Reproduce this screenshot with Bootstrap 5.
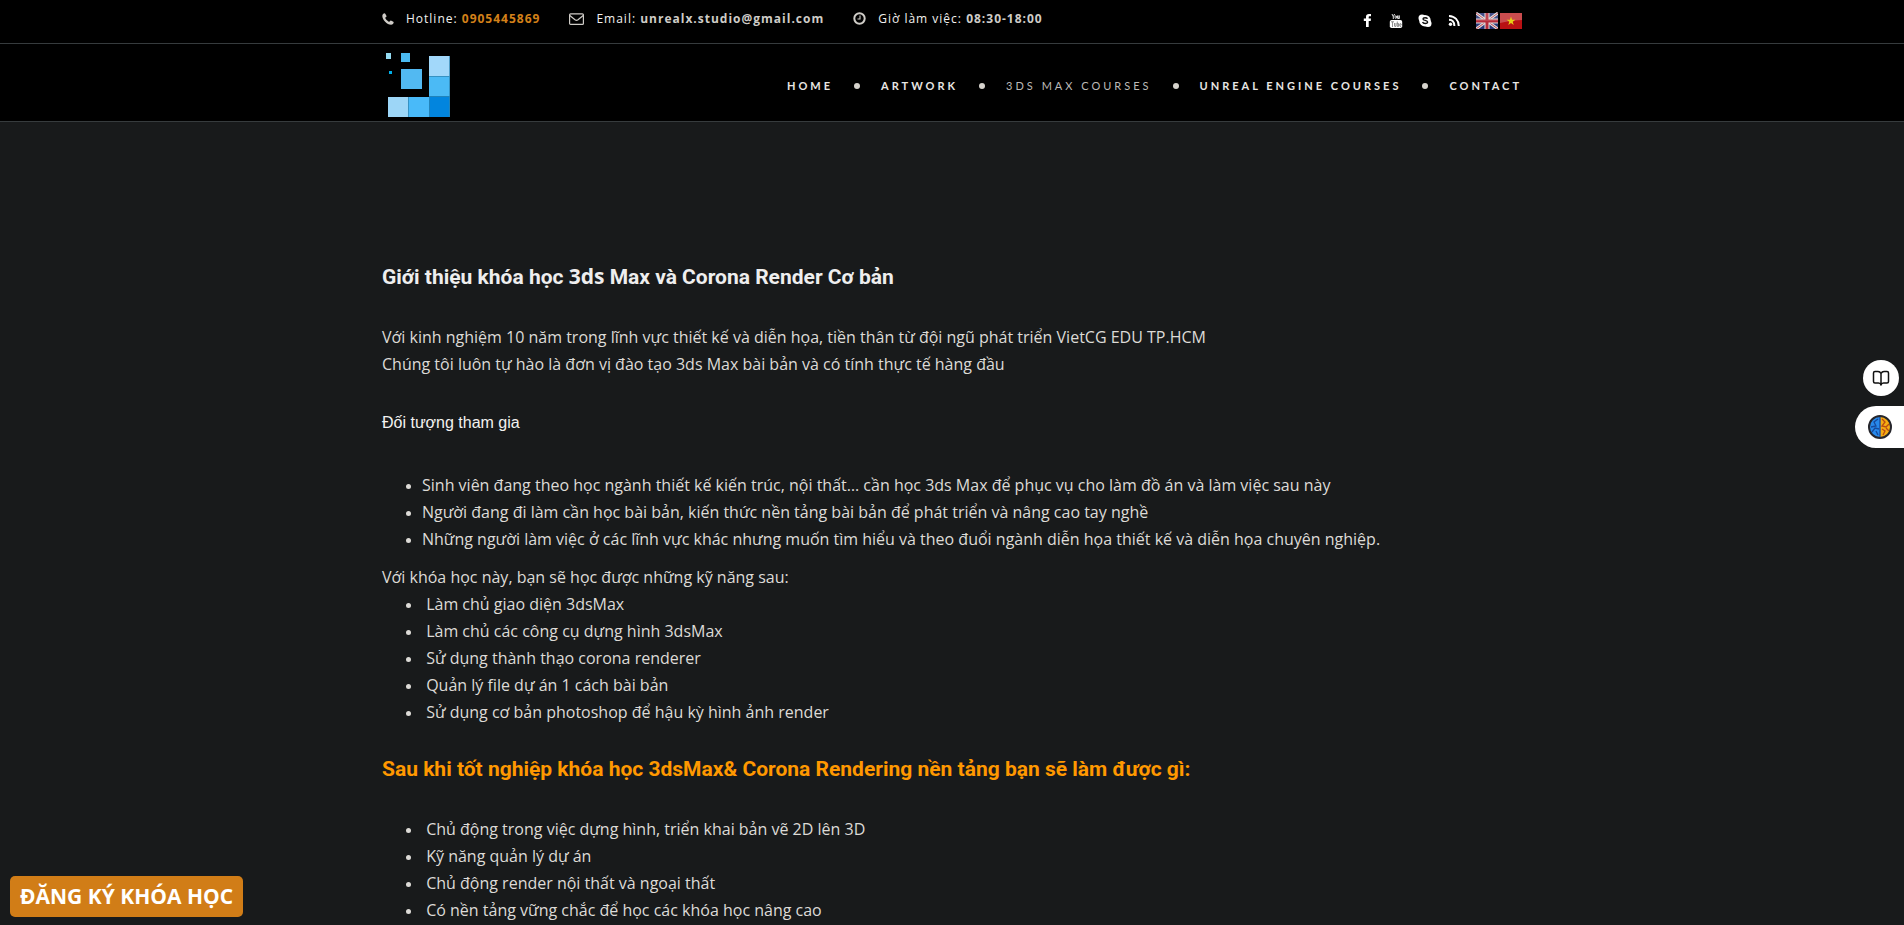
<!DOCTYPE html>
<html lang="vi">
<head>
<meta charset="utf-8">
<meta name="viewport" content="width=device-width, initial-scale=1">
<title>Khóa học 3ds Max và Corona Render</title>
<link href="https://cdn.jsdelivr.net/npm/bootstrap@5.3.0/dist/css/bootstrap.min.css" rel="stylesheet">
<style>
  body { background: #181a1b; color: #dddbd7; font-family: "Open Sans", sans-serif; font-size: 16px; line-height: 27px; }
  .page-width { max-width: 1164px; }
  .topbar { background: #000; border-bottom: 1px solid #363b3d; font-size: 12px; line-height: 20px; letter-spacing: 1px; min-height: 44px; }
  .topbar .info { color: #f2f1ef; gap: 29px; padding-top: 8px; }
  .info-item { gap: 12px; }
  .topbar a { text-decoration: none; }
  .info strong, .info strong a { color: #cfccc7; font-weight: 700; }
  .info svg { color: #cfccc7; }
  .info strong .phone-link { color: #d38019; }
  .social { gap: 15px; padding-top: 12px; }
  .social a { color: #fff; display: flex; }
  .social .flags { gap: 2px; }
  .main-nav { background: #000; border-bottom: 1px solid #363b3d; height: 78px; }
  .main-nav .nav-link { font-family: Lato, sans-serif; font-size: 11px; font-weight: 700; letter-spacing: 3px; line-height: 20px; color: #e8e6e3; padding: 0; }
  .main-nav .nav-link.active { color: #bcbab7; font-weight: 400; }
  .menu-list { gap: 21px; padding-top: 6px; }
  .menu-list li + li { display: flex; align-items: center; gap: 21px; }
  .menu-list li + li::before { content: ""; width: 6px; height: 6px; border-radius: 50%; background: #d6d3cd; }
  main { padding-top: 138px; }
  h1, h2 { font-family: Roboto, sans-serif; font-weight: 700; font-size: 21px; line-height: 32px; margin: 0 0 31px; }
  h1 { color: #eee; }
  h1 span { font-family: "Open Sans", sans-serif; }
  h2.outcome { color: #ff9800; margin-top: 27px; }
  h3 { font-family: "Liberation Sans", sans-serif; font-size: 16px; font-weight: 400; line-height: 27px; color: #f3f2f0; margin: 31px 0 36px; }
  .skills-intro { margin: 11px 0 0; }
  main ul { padding-left: 40px; margin: 0; }
  main li::marker { font-size: 13px; }
  .register { left: 10px; bottom: 8px; background: #d17d17; color: #fff; border: 0; border-radius: 5px; font-size: 21px; font-weight: 700; line-height: 27px; padding: 7px 10px; z-index: 5; }
  .side-tools { right: 0; top: 360px; gap: 10px; }
  .side-tools button { background: #fff; border: 0; padding: 0; display: flex; align-items: center; justify-content: center; }
  .reader { width: 36px; height: 36px; border-radius: 50%; margin-right: 5px; }
  .assistant { width: 49px; height: 42px; border-radius: 21px 0 0 21px; }
</style>
</head>
<body class="min-vh-100">
<header>
  <div class="topbar">
    <div class="container page-width d-flex justify-content-between">
      <div class="info d-flex flex-wrap">
        <div class="info-item d-flex align-items-center">
          <svg width="12" height="12" viewBox="0 0 12 12" fill="currentColor"><path d="M2.700.2C1.500.5.3 1.300.3 2.900c.2 4 4.600 8.600 8.800 8.900 1.500 0 2.500-1.200 2.600-2.500 0-.4-2.600-1.900-3-1.800-.5.1-1 1.300-1.500 1.300C6.200 8.600 3.500 6 3.300 4.900c0-.5 1.200-1 1.300-1.600C4.600 2.900 3.300.2 2.700.2z"/></svg>
          <span>Hotline: <strong><a class="phone-link" href="tel:0905445869">0905445869</a></strong></span>
        </div>
        <div class="info-item d-flex align-items-center">
          <svg width="15" height="12" viewBox="0 0 15 12" fill="none" stroke="currentColor" stroke-width="1.200"><rect x=".6" y=".8" width="13.800" height="10.600" rx="1"/><path d="M.8 2.500l5.200 4.300q1.500 1.100 3 0l5.200-4.300"/></svg>
          <span>Email: <strong><a href="mailto:unrealx.studio@gmail.com">unrealx.studio@gmail.com</a></strong></span>
        </div>
        <div class="info-item d-flex align-items-center">
          <svg width="13" height="13" viewBox="0 0 13 13" fill="none" stroke="currentColor"><circle cx="6.500" cy="6.500" r="5.200" stroke-width="2"/><path d="M7 3.500v3.500H4.500" stroke-width="1.100"/></svg>
          <span>Giờ làm việc: <strong>08:30-18:00</strong></span>
        </div>
      </div>
      <div class="social d-flex align-items-start">
        <a href="#" aria-label="Facebook"><svg width="14" height="16" viewBox="0 0 14 16" fill="currentColor"><path d="M11 2v2.200H9.700c-.8 0-1 .4-1 1v1.300H11l-.3 2.400h-2V15H6V8.900H3.800V6.500H6V4.800C6 3 7.100 2 8.900 2z"/></svg></a>
        <a href="#" aria-label="YouTube"><svg width="14" height="16" viewBox="0 0 14 16"><path d="M3 2l1.300 2.700V7M5.600 2L4.300 4.700M10 3.500v2.700q-1.500 1.300-1.500 0V3.500M10.200 3.500V7" fill="none" stroke="#ddd" stroke-width="1"/><ellipse cx="6.800" cy="5.100" rx=".8" ry="1.400" fill="none" stroke="#ddd"/><rect x=".8" y="8" width="12.400" height="8" rx="1.800" fill="#fff"/><path d="M2 9.800h3M3.500 9.800V15M5.500 11v3.200q0 .8 1.500 0V11M8.300 9.500v5h1.200v-3H8.300M12.200 14.300q-1.500.6-1.500-.6v-1.200q0-1 .8-1t.7 1.500h-1.500" fill="none" stroke="#777" stroke-width=".8"/></svg></a>
        <a href="#" aria-label="Skype"><svg width="14" height="16" viewBox="0 0 14 16"><circle cx="4" cy="6" r="3.500" fill="#fff"/><circle cx="10" cy="11.500" r="3.500" fill="#fff"/><circle cx="7" cy="8.700" r="5.800" fill="#fff"/><path d="M9.500 6.700c-.6-1.300-4.500-1.500-4.500.2 0 2 4.600.9 4.600 3.200 0 1.800-4.400 1.800-5-.1" fill="none" stroke="#111" stroke-width="1.400"/></svg></a>
        <a href="#" aria-label="RSS"><svg width="14" height="16" viewBox="0 0 14 16" fill="none" stroke="#fff" stroke-width="2"><circle cx="3.500" cy="12.200" r="1.700" fill="#fff" stroke="none"/><path d="M2 7.800c3.500.1 5.300 2.400 5.400 6.200M2 4c6 .2 9.600 4.300 9.800 10"/></svg></a>
        <div class="flags d-flex">
          <a href="#" aria-label="English"><svg width="22" height="17" viewBox="0 0 22 17"><path fill="#293678" d="M0 1h22v16H0z"/><path d="M0 1l22 16M22 1L0 17" stroke="#ddd" stroke-width="3"/><path d="M0 1l22 16M22 1L0 17" stroke="#bd4450"/><path d="M11 1v16M0 9h22" stroke="#ddd" stroke-width="5"/><path d="M11 1v16M0 9h22" stroke="#b72c3b" stroke-width="3"/><path fill="#fff" opacity=".12" d="M0 1h22v8H0z"/></svg></a>
          <a href="#" aria-label="Tiếng Việt"><svg width="22" height="17" viewBox="0 0 22 17"><path fill="#b91113" d="M0 1h22v16H0z"/><path fill="#fff" opacity=".25" d="M0 1h22v7q-11 0-22 3z"/><path fill="#e7cf16" d="M11 4.500l1.100 3.200h3.300l-2.700 2 1 3.200-2.700-2-2.700 2 1-3.200-2.700-2h3.300z"/></svg></a>
        </div>
      </div>
    </div>
  </div>
  <nav class="main-nav" aria-label="Menu chính">
    <div class="container page-width d-flex justify-content-between align-items-center h-100">
      <a href="#" aria-label="UnrealX Studio"><svg class="d-block" width="68" height="68" viewBox="0 0 68 68"><path fill="#94dbf2" d="M4 4h5v6H4z"/><path fill="#4ab9f0" d="M19 4h9v9h-9z"/><path fill="#00aee8" d="M7 22h3v3H7z"/><path fill="#52b9f2" d="M19 20h21v20H19z"/><path fill="#a2d8fa" d="M47 7h21v20H47z"/><path fill="#4bbaf5" d="M47 27h21v20H47z"/><path fill="#9dd6f7" d="M6 48h20v20H6z"/><path fill="#49baf9" d="M26 48h21v20H26z"/><path fill="#0285de" d="M47 47h21v21H47z"/><path d="M47 27.500h20M47 47.500h20M26.500 48v20M47.500 47v21M67.500 7v61" stroke="#2d81ac" fill="none" opacity=".7"/></svg></a>
      <ul class="menu-list nav">
        <li><a class="nav-link" href="#">HOME</a></li>
        <li><a class="nav-link" href="#">ARTWORK</a></li>
        <li><a class="nav-link active" href="#" aria-current="page">3DS MAX COURSES</a></li>
        <li><a class="nav-link" href="#">UNREAL ENGINE COURSES</a></li>
        <li><a class="nav-link" href="#">CONTACT</a></li>
      </ul>
    </div>
  </nav>
</header>
<main class="container page-width">
  <h1>Giới thiệu khóa học <span>3ds</span> Max và Corona Render Cơ bản</h1>
  <p class="mb-0">Với kinh nghiệm 10 năm trong lĩnh vực thiết kế và diễn họa, tiền thân từ đội ngũ phát triển VietCG EDU TP.HCM<br>Chúng tôi luôn tự hào là đơn vị đào tạo 3ds Max bài bản và có tính thực tế hàng đầu</p>
  <h3>Đối tượng tham gia</h3>
  <ul>
    <li>Sinh viên đang theo học ngành thiết kế kiến trúc, nội thất… cần học 3ds Max để phục vụ cho làm đồ án và làm việc sau này</li>
    <li>Người đang đi làm cần học bài bản, kiến thức nền tảng bài bản để phát triển và nâng cao tay nghề</li>
    <li>Những người làm việc ở các lĩnh vực khác nhưng muốn tìm hiểu và theo đuổi ngành diễn họa thiết kế và diễn họa chuyên nghiệp.</li>
  </ul>
  <p class="skills-intro">Với khóa học này, bạn sẽ học được những kỹ năng sau:</p>
  <ul>
    <li>&nbsp;Làm chủ giao diện 3dsMax</li>
    <li>&nbsp;Làm chủ các công cụ dựng hình 3dsMax</li>
    <li>&nbsp;Sử dụng thành thạo corona renderer</li>
    <li>&nbsp;Quản lý file dự án 1 cách bài bản</li>
    <li>&nbsp;Sử dụng cơ bản photoshop để hậu kỳ hình ảnh render</li>
  </ul>
  <h2 class="outcome">Sau khi tốt nghiệp khóa học 3dsMax&amp; Corona Rendering nền tảng bạn sẽ làm được gì:</h2>
  <ul>
    <li>&nbsp;Chủ động trong việc dựng hình, triển khai bản vẽ 2D lên 3D</li>
    <li>&nbsp;Kỹ năng quản lý dự án</li>
    <li>&nbsp;Chủ động render nội thất và ngoại thất</li>
    <li>&nbsp;Có nền tảng vững chắc để học các khóa học nâng cao</li>
  </ul>
</main>
<button type="button" class="register position-fixed">ĐĂNG KÝ KHÓA HỌC</button>
<div class="side-tools position-fixed d-flex flex-column align-items-end">
  <button type="button" class="reader" aria-label="Chế độ đọc"><svg width="18" height="18" viewBox="0 0 18 18" fill="none" stroke="#111" stroke-width="1.500" stroke-linejoin="round"><path d="M9 4.500Q8 2.500 6 2.500H3Q1.500 2.500 1.500 4V12.500Q1.500 14 3 14H6.500Q8.500 14 9 16Q9.500 14 11.500 14H15Q16.500 14 16.500 12.500V4Q16.500 2.500 15 2.500H12Q10 2.500 9 4.500V16"/></svg></button>
  <button type="button" class="assistant" aria-label="Trợ lý AI"><svg width="26" height="26" viewBox="0 0 26 26"><circle cx="13" cy="13" r="11" fill="#2789ec"/><path d="M13 2a11 11 0 0 1 0 22z" fill="#f6ac12"/><path d="M13 3v20M11 5L7 8l2 4-5 1M12 15l-4-1-3 4M11 21l-2-4" fill="none" stroke="#174a9c" stroke-width="1.300"/><path d="M15 5l3 3-3 4 4 1 3-3M15 15l3 2-2 4M19 14l3 3" fill="none" stroke="#b94c14" stroke-width="1.300"/><circle cx="13" cy="13" r="11" fill="none" stroke="#26262c" stroke-width="2"/></svg></button>
</div>
<script src="https://cdn.jsdelivr.net/npm/bootstrap@5.3.0/dist/js/bootstrap.bundle.min.js"></script>
</body>
</html>
